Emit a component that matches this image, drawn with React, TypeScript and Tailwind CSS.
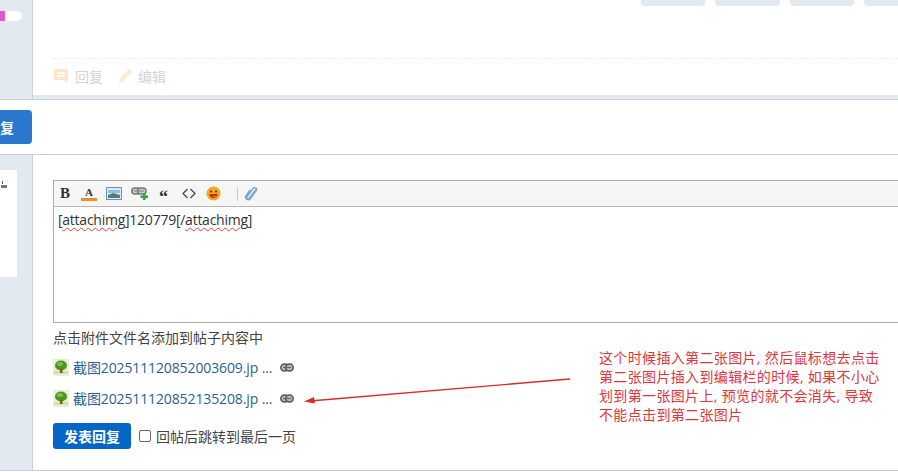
const FONT = "font-['Open_Sans','Noto_Sans_CJK_SC',sans-serif]"

function ReplyIcon() {
  return (
    <svg width="16" height="16" viewBox="0 0 16 16" className="opacity-30">
      <path d="M1 1h14v11h-1v3l-3-3H1z" fill="#f5b04c" />
      <path d="M4 5h8M4 8h8" stroke="#fff" strokeWidth="1.5" />
    </svg>
  )
}

function PencilIcon() {
  return (
    <svg width="16" height="16" viewBox="0 0 16 16" className="opacity-30">
      <path d="M12 1l3 3-9 9-4 2 1-5z" fill="#f5c06c" />
    </svg>
  )
}

function ChainIcon() {
  return (
    <svg width="14" height="9" viewBox="0 0 14 9">
      <rect x="0.8" y="1" width="7.5" height="7" rx="3.5" fill="#bbb" stroke="#555" strokeWidth="1.5" />
      <rect x="5.7" y="1" width="7.5" height="7" rx="3.5" fill="#bbb" stroke="#555" strokeWidth="1.5" />
      <path d="M3 4.5h8" stroke="#666" strokeWidth="1.2" />
    </svg>
  )
}

function ImageFileIcon() {
  return (
    <svg width="16" height="17" viewBox="0 0 16 17">
      <rect width="16" height="17" fill="#e6f2dc" />
      <rect x="1" y="12" width="14" height="3" fill="#e0dc96" />
      <ellipse cx="8" cy="6.5" rx="6" ry="5" fill="#4f9420" />
      <ellipse cx="7" cy="5" rx="3" ry="2" fill="#7fbf40" />
      <rect x="7" y="10" width="2.5" height="4" fill="#7a5a26" />
    </svg>
  )
}

function ToolbarIcons() {
  return (
    <div className="flex items-center h-[26px] pl-[5px] bg-[#f6f6f6] border-b border-[#b5b5b5]">
      <span className="w-[12px] text-center font-['Liberation_Serif',serif] font-bold text-[15px] text-[#333]">B</span>
      <svg width="16" height="16" viewBox="0 0 16 16" className="ml-[10px]">
        <text x="8" y="10" textAnchor="middle" fontSize="11" fontWeight="700" fontFamily="Liberation Serif, serif" fill="#333">A</text>
        <rect x="0" y="12" width="16" height="3" fill="#e8912c" />
      </svg>
      <svg width="16" height="13" viewBox="0 0 16 13" className="ml-[9px]">
        <rect x="0.5" y="0.5" width="15" height="12" fill="#dbe9f2" stroke="#6f93ad" />
        <path d="M2 3h12v3H2z" fill="#8fc0e0" />
        <path d="M2 8l5-2 7 2v3H2z" fill="#4e7f73" />
      </svg>
      <svg width="17" height="13" viewBox="0 0 17 13" className="ml-[9px]">
        <rect x="0.8" y="1" width="8.5" height="6" rx="3" fill="#ccc" stroke="#777" strokeWidth="1.5" />
        <rect x="6.5" y="1" width="8.5" height="6" rx="3" fill="#ccc" stroke="#777" strokeWidth="1.5" />
        <path d="M3 4h10" stroke="#888" strokeWidth="1.2" />
        <path d="M12 6h2.5v2.5H17V11h-2.5v2H12v-2H9.500V8.500H12z" fill="#35a83f" />
      </svg>
      <span className="w-[9px] ml-[11px] h-[14px] font-['Liberation_Serif',serif] font-bold text-[18px] leading-[20px] text-[#333]">“</span>
      <svg width="14" height="11" viewBox="0 0 14 11" className="ml-[14px]">
        <path d="M5.500 1L1 5.500 5.500 10M8.500 1L13 5.500 8.500 10" fill="none" stroke="#444" strokeWidth="1.2" />
      </svg>
      <svg width="15" height="15" viewBox="0 0 15 15" className="ml-[10px]">
        <circle cx="7.500" cy="7.500" r="7" fill="#f5a623" />
        <circle cx="5" cy="5.500" r="1.100" fill="#5a3300" />
        <circle cx="10" cy="5.500" r="1.100" fill="#5a3300" />
        <path d="M3.500 8h8c0 2.500-2 4-4 4s-4-1.500-4-4z" fill="#b3341a" />
        <path d="M7 10h3c0 1.500-3 1.500-3 0z" fill="#f08a8a" />
      </svg>
      <span className="w-px h-[14px] ml-[16px] bg-[#c4ccd2]" />
      <svg width="15" height="16" viewBox="0 0 15 16" className="ml-[6px]">
        <path d="M12 3.500L5.500 12c-1 1.300-3 .6-2.800-1L9 2.500c1.500-1.800 4.300-.3 3.300 1.800L6.500 12.500c-2 2.500-6 .6-4.800-2.500L6 4" fill="none" stroke="#7ba5d1" strokeWidth="1.400" />
      </svg>
    </div>
  )
}

function Misspelt({ children }: { children: string }) {
  return <span className="underline decoration-wavy decoration-[#e23b3b] decoration-1 underline-offset-2">{children}</span>
}

function FileRow({ name }: { name: string }) {
  return (
    <div className="flex items-center h-[17px]">
      <ImageFileIcon />
      <span className="ml-[4px] w-[207px] text-[14px] leading-[17px] tracking-[-0.12px] text-[#2a5f93] whitespace-nowrap">{name} ...</span>
      <ChainIcon />
    </div>
  )
}

export default function App() {
  return (
    <div className={`${FONT} relative w-[898px] h-[472px] overflow-hidden bg-white flex flex-col`}>
      {/* previous post */}
      <div className="flex h-[100px] shrink-0 border-b border-[#c9ced3]">
        <div className="w-[33px] shrink-0 bg-[#e3e9f0] border-r border-[#c9d3dc] pt-[11px]">
          <div className="w-[22px] h-[10px] rounded-r-full bg-white overflow-hidden">
            <div className="w-[5px] h-full bg-[#ee55cc]" />
          </div>
        </div>
        <div className="flex-1 flex flex-col">
          <div className="flex justify-end gap-[10px] h-[6px] -mr-[30px]">
            <div className="w-[64px] bg-[#e3e9f0] rounded-b-[4px]" />
            <div className="w-[65px] bg-[#e3e9f0] rounded-b-[4px]" />
            <div className="w-[64px] bg-[#e3e9f0] rounded-b-[4px]" />
            <div className="w-[64px] bg-[#e3e9f0] rounded-b-[4px]" />
          </div>
          <div className="ml-[20px] mt-[52px] h-[35px] border-t border-dashed border-[#eeeeee] flex items-center text-[14px] text-[#d4d4d4]">
            <ReplyIcon />
            <span className="ml-[6px]">回复</span>
            <span className="ml-[14px]"><PencilIcon /></span>
            <span className="ml-[5px]">编辑</span>
          </div>
          <div className="mt-auto h-[4px] bg-[#e3e9f0]" />
        </div>
      </div>

      {/* reply button strip */}
      <div className="h-[55px] shrink-0 border-b border-[#c9ced3] pt-[10px]">
        <div className="w-[32px] h-[34px] bg-[#2a77cf] rounded-r-[4px] flex items-center font-bold text-[14px] text-white">复</div>
      </div>

      {/* reply form */}
      <div className="flex h-[316px] shrink-0 border-b border-[#c9ced3]">
        <div className="w-[33px] shrink-0 bg-[#e3e9f0] border-r border-[#c9d3dc] pt-[15px]">
          <div className="w-[17px] h-[107px] bg-white pt-[11px] pl-[1px]">
            <div className="w-[1px] h-[3px] ml-[1px] bg-[#555]" />
            <div className="w-[6px] h-[3px] mt-[1px] bg-[#777]" />
          </div>
        </div>
        <div className="flex-1 pl-[20px] pt-[25px]">
          <div className="h-[143px] -mr-[2px] border border-r-0 border-[#ababab]">
            <ToolbarIcons />
            <div className="pl-[4px] pt-[2px] text-[14px] leading-[22px] tracking-[-0.25px] text-[#333]">
              [<Misspelt>attachimg</Misspelt>]120779[/<Misspelt>attachimg</Misspelt>]
            </div>
          </div>
          <div className="mt-[5px] text-[14px] leading-[20px] text-[#444]">点击附件文件名添加到帖子内容中</div>
          <div className="mt-[11px] flex flex-col gap-[14px]">
            <FileRow name="截图202511120852003609.jp" />
            <FileRow name="截图202511120852135208.jp" />
          </div>
          <div className="mt-[16px] flex items-center">
            <button className="w-[78px] h-[26px] rounded-[3px] bg-[#0566c7] text-[14px] font-bold text-white">发表回复</button>
            <span className="ml-[8px] w-[12px] h-[12px] rounded-[2px] border border-[#666] bg-white" />
            <span className="ml-[5px] text-[14px] text-[#444]">回帖后跳转到最后一页</span>
          </div>
        </div>
      </div>

      {/* annotation drawn on top of the screenshot */}
      <svg width="280" height="40" viewBox="0 0 280 40" className="absolute left-[298px] top-[370px]">
        <path d="M272 9L12 31" stroke="#d92b2b" strokeWidth="1.300" />
        <path d="M6 31.500l10-4.500 .8 6.500z" fill="#d92b2b" />
      </svg>
      <div className="absolute left-[599px] top-[348px] w-[295px] text-[14px] leading-[19px] tracking-[0.35px] text-[#e0353c]">
        这个时候插入第二张图片, 然后鼠标想去点击
        <br />
        第二张图片插入到编辑栏的时候, 如果不小心
        <br />
        划到第一张图片上, 预览的就不会消失, 导致
        <br />
        不能点击到第二张图片
      </div>
    </div>
  )
}
